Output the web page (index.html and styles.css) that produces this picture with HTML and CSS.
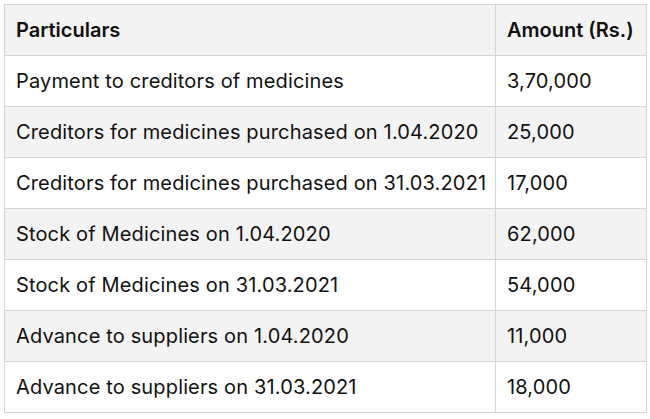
FILE: index.html
```html
<!DOCTYPE html>
<html>
<head>
<meta charset="utf-8">
<link rel="stylesheet" href="styles.css">
</head>
<body>
<table class="tbl">
  <thead>
    <tr><th class="c1">Particulars</th><th class="c2">Amount (Rs.)</th></tr>
  </thead>
  <tbody>
    <tr><td>Payment to creditors of medicines</td><td>3,70,000</td></tr>
    <tr class="alt"><td>Creditors for medicines purchased on 1.04.2020</td><td>25,000</td></tr>
    <tr><td>Creditors for medicines purchased on 31.03.2021</td><td>17,000</td></tr>
    <tr class="alt"><td>Stock of Medicines on 1.04.2020</td><td>62,000</td></tr>
    <tr><td>Stock of Medicines on 31.03.2021</td><td>54,000</td></tr>
    <tr class="alt"><td>Advance to suppliers on 1.04.2020</td><td>11,000</td></tr>
    <tr><td>Advance to suppliers on 31.03.2021</td><td>18,000</td></tr>
  </tbody>
</table>
</body>
</html>
```
FILE: styles.css
```css
html, body { margin: 0; padding: 0; background: #fff; }
body { padding: 4px; font-family: Inter, "Noto Sans", sans-serif; color: #111; }
.tbl { border-collapse: collapse; table-layout: fixed; width: 642px; font-size: 20px; }
.tbl th, .tbl td { border: 1px solid #d4d4d4; height: 51px; padding: 0 11px; text-align: left; box-sizing: border-box; white-space: nowrap; }
.tbl td { letter-spacing: 0.15px; }
.tbl th { background: #f3f3f3; font-weight: 600; }
.tbl .c1 { width: 491px; }
.tbl .c2 { width: 151px; }
.tbl tr.alt td { background: #f3f3f3; }
```
